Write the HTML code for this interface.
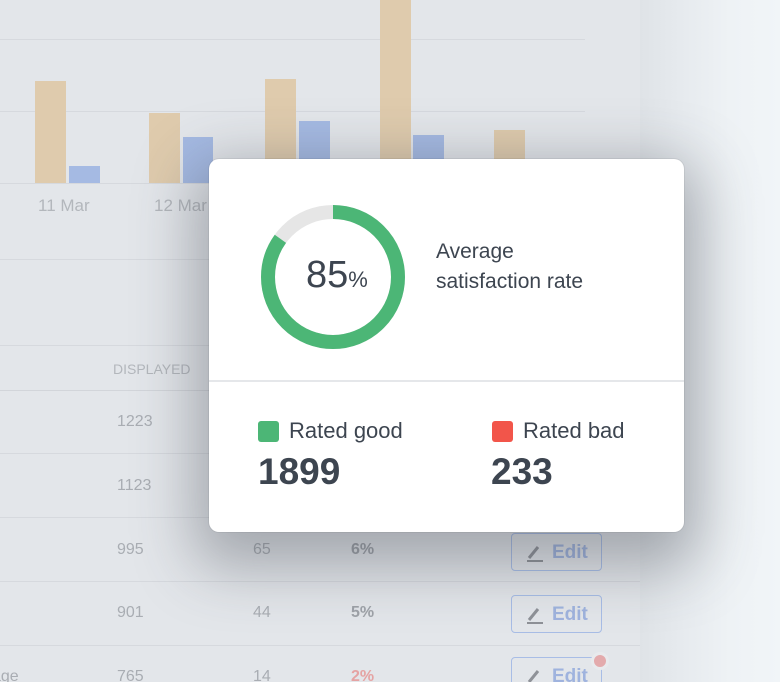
<!DOCTYPE html>
<html><head><meta charset="utf-8"><style>
*{margin:0;padding:0;box-sizing:border-box}
html,body{width:780px;height:682px;overflow:hidden}
body{position:relative;font-family:"Liberation Sans",sans-serif;background:linear-gradient(90deg,#dfe3e7 640px,#e6eaee 680px,#eef2f5 730px,#f1f5f8 780px)}
.panel{position:absolute;left:0;top:0;width:640px;height:682px;background:#e3e6ea}
.abs{position:absolute}
.hl{position:absolute;left:0;height:1px;background:#d6d9de}
.bar{position:absolute}
.t{background:#dfcbad}.b{background:#a5bae3}
.txt{position:absolute;color:#a9adb3;font-size:16px}
.edit{position:absolute;left:511px;width:91px;height:38px;border:1.5px solid #a8bde6;border-radius:4px;color:#9fb3de;font-size:19px;font-weight:bold;padding:8px 0 0 40px}
.edit svg{position:absolute;left:14px;top:9px}
.card{position:absolute;left:209px;top:159px;width:475px;height:373px;background:#fff;border-radius:10px;box-shadow:0 20px 60px 15px rgba(60,65,75,.38),0 0 0 1px rgba(0,0,0,.06)}
</style></head><body>
<div class="panel">
<div class="hl" style="top:39px;width:585px"></div>
<div class="hl" style="top:111px;width:585px"></div>
<div class="hl" style="top:183px;width:585px"></div>
<div class="bar t" style="left:35px;top:81px;width:31px;height:102px"></div>
<div class="bar b" style="left:69px;top:166px;width:31px;height:17px"></div>
<div class="bar t" style="left:149px;top:113px;width:31px;height:70px"></div>
<div class="bar b" style="left:183px;top:137px;width:30px;height:46px"></div>
<div class="bar t" style="left:265px;top:79px;width:31px;height:104px"></div>
<div class="bar b" style="left:299px;top:121px;width:31px;height:62px"></div>
<div class="bar t" style="left:380px;top:0;width:31px;height:183px"></div>
<div class="bar b" style="left:413px;top:135px;width:31px;height:48px"></div>
<div class="bar t" style="left:494px;top:130px;width:31px;height:53px"></div>
<div class="txt" style="left:38px;top:196px;font-size:17px;color:#b3b7bc">11 Mar</div>
<div class="txt" style="left:154px;top:196px;font-size:17px;color:#b3b7bc">12 Mar</div>
<div class="hl" style="top:259px;width:640px"></div>
<div class="hl" style="top:345px;width:640px"></div>
<div class="txt" style="left:113px;top:361px;font-size:14px;color:#b3b7bc">DISPLAYED</div>
<div class="hl" style="top:390px;width:640px;background:#d2d5da"></div>
<div class="txt" style="left:117px;top:413px">1223</div>
<div class="hl" style="top:453px;width:640px"></div>
<div class="txt" style="left:117px;top:477px">1123</div>
<div class="hl" style="top:517px;width:640px"></div>
<div class="txt" style="left:117px;top:541px">995</div>
<div class="txt" style="left:253px;top:541px">65</div>
<div class="txt" style="left:351px;top:541px;font-weight:bold;color:#9ea2a8">6%</div>
<div class="edit" style="top:533px"><svg width="18" height="20" viewBox="0 0 18 20"><path d="M3 15 L12 4" stroke="#8f9298" stroke-width="3"/><rect x="1" y="17" width="16" height="2" fill="#8f9298"/></svg>Edit</div>
<div class="hl" style="top:581px;width:640px"></div>
<div class="txt" style="left:117px;top:604px">901</div>
<div class="txt" style="left:253px;top:604px">44</div>
<div class="txt" style="left:351px;top:604px;font-weight:bold;color:#9ea2a8">5%</div>
<div class="edit" style="top:595px"><svg width="18" height="20" viewBox="0 0 18 20"><path d="M3 15 L12 4" stroke="#8f9298" stroke-width="3"/><rect x="1" y="17" width="16" height="2" fill="#8f9298"/></svg>Edit</div>
<div class="hl" style="top:645px;width:640px"></div>
<div class="txt" style="left:-8px;top:668px">age</div>
<div class="txt" style="left:117px;top:668px">765</div>
<div class="txt" style="left:253px;top:668px">14</div>
<div class="txt" style="left:351px;top:668px;font-weight:bold;color:#e5a3a3">2%</div>
<div class="edit" style="top:657px"><svg width="18" height="20" viewBox="0 0 18 20"><path d="M3 15 L12 4" stroke="#8f9298" stroke-width="3"/></svg>Edit</div>
<div class="abs" style="left:591px;top:652px;width:18px;height:18px;border-radius:50%;background:#e3aaac;border:3px solid #e8eaed"></div>
</div>
<div class="card">
<svg class="abs" style="left:52px;top:46px" width="144" height="144" viewBox="0 0 144 144">
<circle cx="72" cy="72" r="65" fill="none" stroke="#e6e6e6" stroke-width="14"/>
<circle cx="72" cy="72" r="65" fill="none" stroke="#4cb676" stroke-width="14" stroke-dasharray="347 500" transform="rotate(-90 72 72)"/>
</svg>
<div class="abs" style="left:97px;top:95px;color:#3d4550;font-size:38px">85<span style="font-size:22px">%</span></div>
<div class="abs" style="left:227px;top:78px;color:#3d4550;font-size:21px;line-height:30px">Average<br>satisfaction rate</div>
<div class="abs" style="left:0;top:221px;width:475px;height:2px;background:#e5e7ea"></div>
<div class="abs" style="left:49px;top:262px;width:21px;height:21px;border-radius:3px;background:#4cb676"></div>
<div class="abs" style="left:80px;top:259px;color:#3d4550;font-size:22px">Rated good</div>
<div class="abs" style="left:49px;top:292px;color:#3d4550;font-size:37px;font-weight:bold">1899</div>
<div class="abs" style="left:283px;top:262px;width:21px;height:21px;border-radius:3px;background:#f2554a"></div>
<div class="abs" style="left:314px;top:259px;color:#3d4550;font-size:22px">Rated bad</div>
<div class="abs" style="left:282px;top:292px;color:#3d4550;font-size:37px;font-weight:bold">233</div>
</div>
</body></html>
